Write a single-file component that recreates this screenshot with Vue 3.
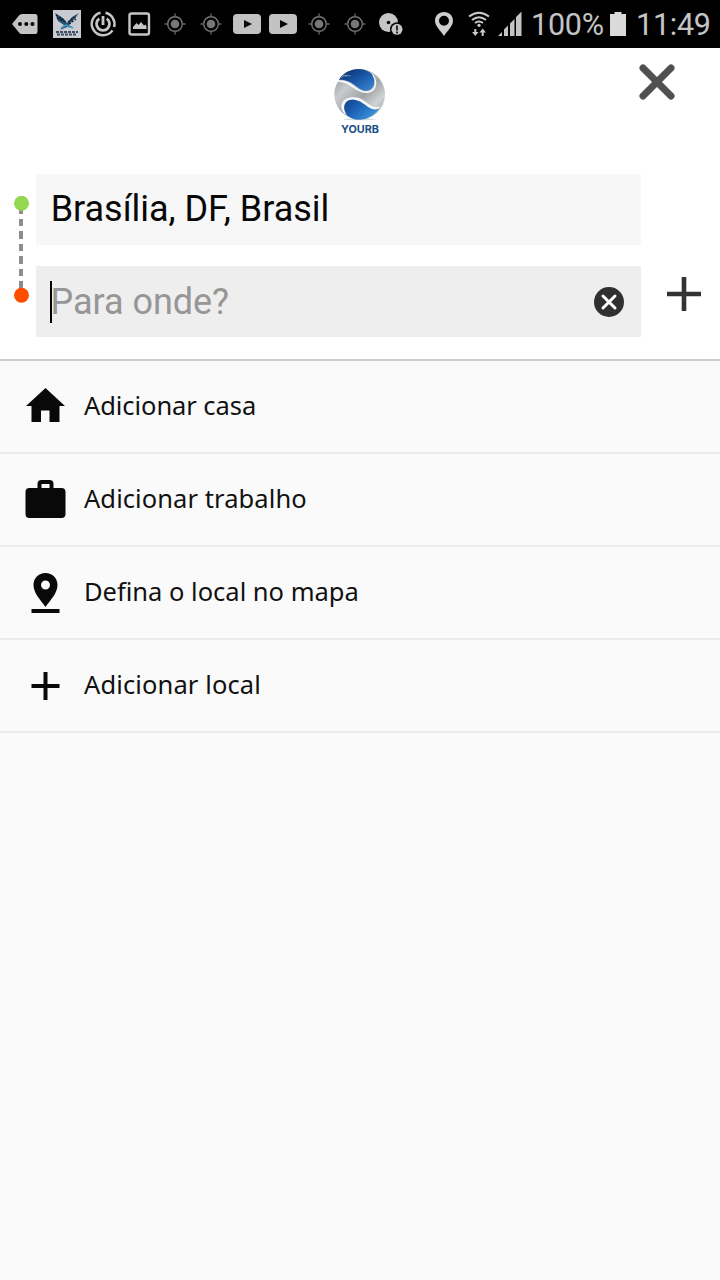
<script setup>
const places = [
  { icon: 'home', label: 'Adicionar casa', cls: 'casa' },
  { icon: 'work', label: 'Adicionar trabalho', cls: 'trabalho' },
  { icon: 'pin', label: 'Defina o local no mapa', cls: 'mapa' },
  { icon: 'add', label: 'Adicionar local', cls: 'local' },
]
const notices = ['download', 'photo', 'gps', 'gps', 'video', 'video', 'gps', 'gps', 'disc']
</script>

<template>
  <main class="screen">
    <header class="status">
      <svg class="tag" viewBox="0 0 49 48"><path d="M12 24l7-8.500q1-1.500 3-1.500h13q2.500 0 2.500 2.500v15q0 2.500-2.500 2.500H22q-2 0-3-1.500z" fill="#c4c4c4"/><g fill="#080808"><circle cx="20" cy="24" r="2"/><circle cx="26.300" cy="24" r="2"/><circle cx="32.500" cy="24" r="2"/></g></svg>
      <svg class="cell" viewBox="0 0 36 48">
        <path d="M4 10h28v28H4z" fill="#c9cbd0"/>
        <path d="M6 13l8 5 4 5 5-6 7-4-5 6-5 6 5 3-7-1-7 3 4-5-6-4z" fill="#24506f"/>
        <path d="M7 15l9 6M8 18l9 4M19 22l9-6M20 24l7-5" stroke="#0d1d30" stroke-width="1.500" stroke-dasharray="2 1.500"/>
        <path d="M12 28l5-3 7 3" stroke="#48a0c8" stroke-width="1.500" fill="none"/>
        <path d="M7 32h22M8 34.500h20" stroke="#3c4b62" stroke-width="2" stroke-dasharray="3 1"/>
      </svg>
      <svg v-for="(n, i) in notices" :key="i" class="cell" viewBox="0 0 36 48">
        <g v-if="n === 'download'" fill="none" stroke="#c6c6c6">
          <path d="M15.500 12.800a11.400 11.400 0 1 0 12 17.600M20.500 12.800A11.400 11.400 0 0 1 29.100 27" stroke-width="2.500"/>
          <path d="M14.300 18.600a6.500 6.500 0 1 0 7.400 0" stroke-width="2.800"/>
          <path d="M18 16v9" stroke-width="2.800"/>
        </g>
        <g v-else-if="n === 'photo'"><rect x="8.500" y="13.500" width="19.500" height="21" rx="2" fill="none" stroke="#c6c6c6" stroke-width="2.400"/><path d="M12 29v-2l3.500-4 2 2 2.500-3 3 3.500 1.500-1 1 2v2.500z" fill="#c6c6c6"/></g>
        <g v-else-if="n === 'gps'"><circle cx="18" cy="24" r="4.300" fill="#777"/><circle cx="18" cy="24" r="7.300" fill="none" stroke="#777" stroke-width="1.400"/><path d="M18 13.500V17M18 31v3.500M7.500 24H11M25 24h3.500" stroke="#666" stroke-width="1.400"/></g>
        <g v-else-if="n === 'video'"><rect x="4" y="14" width="28" height="20" rx="4" fill="#c2c2c2"/><path d="M15 20v8l8-4z" fill="#080808"/></g>
        <g v-else><circle cx="15.500" cy="22.500" r="9.500" fill="#c6c6c6"/><circle cx="15.500" cy="22.500" r="1.800"/><circle cx="24" cy="29.300" r="7"/><circle cx="24" cy="29.300" r="5.500" fill="#c6c6c6"/><path d="M24 25.500v5M24 31.500v2" stroke="#111" stroke-width="1.700"/></g>
      </svg>
      <svg class="marker" viewBox="0 0 26 48"><path fill-rule="evenodd" d="M13 12c5.200 0 9 3.800 9 8.800C22 26 17 30 13 36 9 30 4 26 4 20.800 4 15.800 7.800 12 13 12zm0 3.800a5 5 0 1 0 0 10 5 5 0 0 0 0-10z" fill="#cdcdcd"/></svg>
      <svg class="wifi" viewBox="0 0 26 48"><g fill="none" stroke="#cacaca" stroke-width="2"><path d="M3 16.500q10-7.500 20 0M6 20q7-5.500 14 0M9 23q4-3 8 0"/></g><circle cx="13" cy="25.300" r="1.600" fill="#cacaca"/><path d="M8.300 29h2v3h2.200l-3.200 4-3.200-4h2.200zM15.700 36h2v-3.500h2.200L16.700 28.500l-3.200 4h2.200z" fill="#cacaca"/></svg>
      <svg class="signal" viewBox="0 0 24 48"><path d="M0 36l4-4v4zM6 36v-6.500l4-4V36zM12 36V23.500l4.500-4.500v17zM18 36V17l5.500-5.500V36z" fill="#c4c4c4"/></svg>
      <span class="percent">100%</span>
      <svg class="battery" viewBox="0 0 16 48"><path d="M0 14h4.500v-2h7v2H16v22H0z" fill="#dadada"/></svg>
      <time class="clock">11:49</time>
    </header>

    <section class="search">
      <div class="top">
        <svg class="logo" viewBox="0 0 240 270">
          <defs>
            <linearGradient id="blue" x1="0" y1="0" x2="1" y2="1"><stop offset="0" stop-color="#092b63"/><stop offset=".5" stop-color="#1a56a6"/><stop offset="1" stop-color="#3b8cd8"/></linearGradient>
            <linearGradient id="low" x1="0" y1="0" x2="1" y2=".6"><stop offset="0" stop-color="#103d82"/><stop offset=".5" stop-color="#1e64b8"/><stop offset="1" stop-color="#3c96da"/></linearGradient>
            <linearGradient id="silver" x1="0" y1="0" x2="1" y2="1"><stop offset="0" stop-color="#858b90"/><stop offset=".3" stop-color="#c8cacd"/><stop offset=".55" stop-color="#a2a5a8"/><stop offset=".75" stop-color="#d0d2d4"/><stop offset="1" stop-color="#858b91"/></linearGradient>
          </defs>
          <ellipse cx="119" cy="190" rx="48" ry="3" fill="#d7d9db"/>
          <circle cx="119" cy="115" r="76" fill="url(#silver)"/>
          <path d="M57 71C75 39 126 27 156 54C170 75 161 104 138 104C113 104 100 70 57 71z" fill="url(#blue)"/>
          <path d="M55 73C94 69 109 107 138 106C165 105 173 78 153 50L158 54C180 82 166 111 139 111C107 111 91 77 53 77z" fill="#f8f9fa"/>
          <path d="M77 173C57 144 76 129 102 130C136 132 145 170 177 158C158 188 108 207 77 173z" fill="url(#low)"/>
          <path d="M72 172C51 141 76 122 104 124C140 126 151 165 181 151L178 157C148 170 134 134 103 131C78 129 63 148 79 176z" fill="#f7f8fa"/>
          <path d="M63 65Q80 53 92 61M70 58l12 3" stroke="#6d94bb" stroke-width="3" fill="none"/>
          <text x="63" y="231" textLength="114" lengthAdjust="spacingAndGlyphs">YOURB</text>
        </svg>
        <svg class="close" viewBox="0 0 36 36"><path d="M4 4l28 28M32 4L4 32" stroke="#505050" stroke-width="7" stroke-linecap="round"/></svg>
      </div>
      <div class="route">
        <svg class="track" viewBox="0 0 16 108"><path d="M5 12h4v6H5zM5 23h4v7H5zM5 35h4v8H5zM5 48h4v7H5zM5 60h4v8H5zM5 73h4v7H5zM5 85h4v8H5z" fill="#8d8d8d"/><circle cx="7.500" cy="7.300" r="7.500" fill="#95d750"/><circle cx="7.500" cy="99.300" r="7.500" fill="#ff4d00"/></svg>
        <div class="fields">
          <div class="field"><span class="origin">Brasília, DF, Brasil</span></div>
          <div class="field active"><i class="caret"></i><span class="destination">Para onde?</span>
            <svg class="clear" viewBox="0.500 0 30 30"><circle cx="15.500" cy="15" r="15" fill="#303030"/><path d="M9.500 9l12 12M21.500 9l-12 12" stroke="#fff" stroke-width="3" stroke-linecap="round"/></svg>
          </div>
        </div>
        <svg class="plus" viewBox="0 0 34 34"><path d="M17 0v34M0 17h34" stroke="#333" stroke-width="4.600"/></svg>
      </div>
    </section>

    <ul class="places">
      <li v-for="p in places" :key="p.icon">
        <svg class="place-icon" viewBox="0 0 42 46">
          <path v-if="p.icon === 'home'" d="M21 5L1.500 23H7v16h9.500V27.500h8.500V39h10V23h5.500z"/>
          <path v-else-if="p.icon === 'work'" fill-rule="evenodd" d="M13 12V8q0-4 4-4h8q4 0 4 4v4h8q4 0 4 4v22q0 4-4 4H5q-4 0-4-4V16q0-4 4-4zm4 0h8V8h-8z"/>
          <path v-else-if="p.icon === 'pin'" fill-rule="evenodd" d="M21 4c7 0 12 5 12 12 0 8-7 15-12 22C16 31 9 24 9 16 9 9 14 4 21 4zm0 7.500a4.500 4.500 0 1 0 0 9 4.500 4.500 0 0 0 0-9zM7 40h28v4H7z"/>
          <path v-else d="M19 10h4v12h12v4H23v12h-4V26H7v-4h12z"/>
        </svg>
        <span :class="p.cls">{{ p.label }}</span>
      </li>
    </ul>
  </main>
</template>

<style>
body { background: #fafafa; }
</style>

<style scoped>
* { box-sizing: border-box; }
.screen { width: 720px; height: 1280px; overflow: hidden; background: #fafafa; font-family: Roboto, "Liberation Sans", sans-serif; }
svg { display: block; flex: none; }
.status { height: 48px; background: #000; display: flex; align-items: center; color: #c4c4c4; white-space: nowrap; }
.status svg { height: 48px; }
.tag { width: 49px; }
.cell { width: 36px; }
.marker { width: 26px; margin-left: 22px; }
.wifi { width: 26px; margin-left: 9px; }
.signal { width: 24px; margin-left: 6px; }
.percent, .clock { font-size: 30.500px; line-height: 48px; font-weight: 400; padding-top: 1px; letter-spacing: -0.250px; }
.percent { width: 80px; padding-left: 9px; }
.battery { width: 16px; margin-left: 8px; }
.clock { padding-left: 10px; }
.search { height: 313px; background: #fff; border-bottom: 2px solid #ccc; }
.top { height: 126px; display: flex; padding: 8px 0 0 320px; }
.logo { width: 80px; height: 90px; }
.logo text { font: 700 33px Inter, sans-serif; fill: #1d4e85; }
.close { width: 36px; height: 36px; margin: 8px 0 0 239px; }
.route { display: flex; }
.track { width: 16px; height: 108px; margin: 21.500px 6px 0 14px; }
.fields { width: 605px; display: grid; gap: 21px; }
.field { height: 71px; background: #f7f7f7; display: flex; align-items: center; padding: 0 17px 0 14px; font-size: 36px; color: #080808; white-space: nowrap; }
.field.active { background: #eee; color: #969696; }
.origin { padding: 0 0 2px 0.700px; letter-spacing: -0.030px; }
.destination { padding-left: 0.600px; letter-spacing: -0.050px; }
.caret { width: 2px; height: 42px; background: #000; margin-right: -2px; }
.clear { width: 30px; height: 30px; margin-left: auto; margin-top: 1px; }
.plus { width: 34px; height: 34px; margin: 103px 0 0 26px; }
.places { list-style: none; margin: 0; padding: 0; }
.places li { height: 93px; border-bottom: 2px solid #ebebeb; display: flex; align-items: center; gap: 18px; padding: 0 0 2px 25px; font: 25.500px "Noto Sans", sans-serif; color: #111; white-space: nowrap; }
.place-icon { width: 42px; height: 46px; fill: #090909; margin-left: -1px; overflow: visible; }
.place-icon path { transform: translateX(0.500px); }
.places span { padding-bottom: 2px; }
.casa { letter-spacing: -0.070px; }
.trabalho { letter-spacing: 0.080px; }
.local { letter-spacing: 0.120px; }
</style>
